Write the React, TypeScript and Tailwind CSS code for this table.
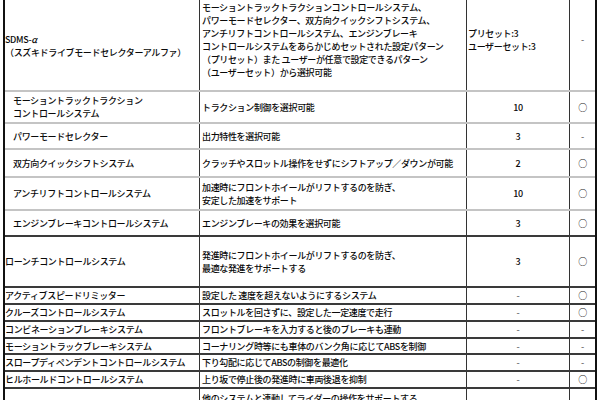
import React from "react";

type Row = {
  h: string;
  line: "gray" | "dark";
  c1: React.ReactNode;
  c1pad?: boolean;
  c2: React.ReactNode;
  c3: string;
  c4: string;
};

const rows: Row[] = [
  { h: "h-[32px]", line: "gray", c1: <>モーショントラックトラクション<br />コントロールシステム</>, c1pad: true, c2: "トラクション制御を選択可能", c3: "10", c4: "○" },
  { h: "h-[26px]", line: "gray", c1: "パワーモードセレクター", c1pad: true, c2: "出力特性を選択可能", c3: "3", c4: "-" },
  { h: "h-[28px]", line: "gray", c1: "双方向クイックシフトシステム", c1pad: true, c2: "クラッチやスロットル操作をせずにシフトアップ／ダウンが可能", c3: "2", c4: "○" },
  { h: "h-[33px]", line: "gray", c1: "アンチリフトコントロールシステム", c1pad: true, c2: <>加速時にフロントホイールがリフトするのを防ぎ、<br />安定した加速をサポート</>, c3: "10", c4: "○" },
  { h: "h-[26px]", line: "dark", c1: "エンジンブレーキコントロールシステム", c1pad: true, c2: "エンジンブレーキの効果を選択可能", c3: "3", c4: "○" },
  { h: "h-[51px]", line: "dark", c1: "ローンチコントロールシステム", c2: <>発進時にフロントホイールがリフトするのを防ぎ、<br />最適な発進をサポートする</>, c3: "3", c4: "○" },
  { h: "h-[17px]", line: "dark", c1: "アクティブスピードリミッター", c2: "設定した 速度を超えないようにするシステム", c3: "-", c4: "○" },
  { h: "h-[17px]", line: "dark", c1: "クルーズコントロールシステム", c2: "スロットルを回さずに、設定した一定速度で走行", c3: "-", c4: "○" },
  { h: "h-[17px]", line: "dark", c1: "コンビネーションブレーキシステム", c2: "フロントブレーキを入力すると後のブレーキも連動", c3: "-", c4: "-" },
  { h: "h-[16px]", line: "dark", c1: "モーショントラックブレーキシステム", c2: "コーナリング時等にも車体のバンク角に応じてABSを制御", c3: "-", c4: "-" },
  { h: "h-[17px]", line: "dark", c1: "スロープディペンデントコントロールシステム", c2: "下り勾配に応じてABSの制御を最適化", c3: "-", c4: "-" },
  { h: "h-[17px]", line: "dark", c1: "ヒルホールドコントロールシステム", c2: "上り坂で停止後の発進時に車両後退を抑制", c3: "-", c4: "○" },
];

const cellBorder = "border-r border-[#333]";

function Mark({ v }: { v: string }) {
  if (v === "○") return <span className="text-[9px] leading-none text-[#222]">○</span>;
  return <span className="text-[#666]">-</span>;
}

export default function App() {
  return (
    <div className="w-[600px] h-[400px] overflow-hidden bg-white text-[#0a0a0a] font-['Noto_Sans_CJK_JP',sans-serif] font-medium text-[9px] leading-[13px] tracking-[-0.35px]">
      <div className="ml-[3px] w-[594px] border-x-2 border-[#111]">
        {/* header row */}
        <div className="flex h-[92px] border-b-2 border-[#c4c4c4]">
          <div className={`w-[195px] ${cellBorder} flex items-center pt-[2px]`}>
            <div className="whitespace-nowrap">
              SDMS-<span className="italic">α</span>
              <br />
              （スズキドライブモードセレクターアルファ）
            </div>
          </div>
          <div className={`w-[267px] ${cellBorder} flex items-center pl-[2px] pb-[10px]`}>
            <div className="whitespace-nowrap">
              モーショントラックトラクションコントロールシステム、
              <br />
              パワーモードセレクター、双方向クイックシフトシステム、
              <br />
              アンチリフトコントロールシステム、エンジンブレーキ
              <br />
              コントロールシステムをあらかじめセットされた設定パターン
              <br />
              （プリセット）また ユーザーが任意で設定できるパターン
              <br />
              （ユーザーセット）から選択可能
            </div>
          </div>
          <div className={`w-[103px] ${cellBorder} flex items-center pl-[1px] pb-[10px]`}>
            <div className="whitespace-nowrap">
              プリセット:3
              <br />
              ユーザーセット:3
            </div>
          </div>
          <div className="flex-1 flex items-center justify-center pb-[12px]">
            <Mark v="-" />
          </div>
        </div>

        {rows.map((r, i) => (
          <div
            key={i}
            className={`flex ${r.h} ${r.line === "gray" ? "border-b-2 border-[#c4c4c4]" : "border-b-2 border-[#3a3a3a]"}`}
          >
            <div className={`w-[195px] ${cellBorder} flex items-center whitespace-nowrap ${r.c1pad ? "pl-[8px]" : "pl-0"}`}>
              <div>{r.c1}</div>
            </div>
            <div className={`w-[267px] ${cellBorder} flex items-center whitespace-nowrap pl-[2px]`}>
              <div>{r.c2}</div>
            </div>
            <div className={`w-[103px] ${cellBorder} flex items-center justify-center`}>
              {r.c3 === "-" ? <Mark v="-" /> : r.c3}
            </div>
            <div className="flex-1 flex items-center justify-center">
              <Mark v={r.c4} />
            </div>
          </div>
        ))}

        <div className="flex h-[30px]">
          <div className={`w-[195px] ${cellBorder}`} />
          <div className={`w-[267px] ${cellBorder} pl-[2px] pt-[3px] whitespace-nowrap`}>
            他のシステムと連動してライダーの操作をサポートする
          </div>
          <div className={`w-[103px] ${cellBorder}`} />
          <div className="flex-1" />
        </div>
      </div>
    </div>
  );
}
